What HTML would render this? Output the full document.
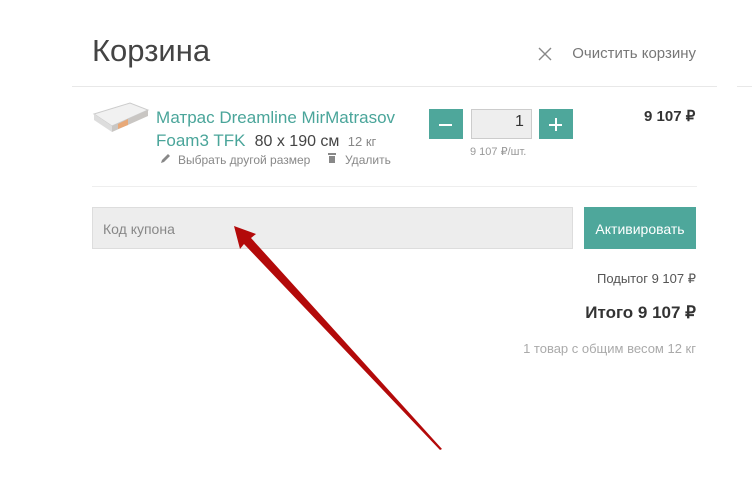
<!DOCTYPE html>
<html><head><meta charset="utf-8"><style>
body{margin:0;width:752px;height:494px;background:#fff;font-family:"Liberation Sans",sans-serif;position:relative;overflow:hidden}
.a{position:absolute;white-space:nowrap}
</style></head><body>
<div class="a" style="left:92px;top:33px;font-size:31px;color:#444;">Корзина</div>
<svg class="a" style="left:538px;top:47px" width="14" height="14"><path d="M1 1L13 13M13 1L1 13" stroke="#888" stroke-width="1.4"/></svg>
<div class="a" style="right:56px;top:45px;font-size:15px;color:#777;">Очистить корзину</div>
<div class="a" style="left:72px;top:86px;width:645px;height:1px;background:#e8e8e8"></div>
<div class="a" style="left:737px;top:86px;width:15px;height:1px;background:#e8e8e8"></div>
<svg class="a" style="left:90px;top:100px" width="62" height="36"><path d="M4 14L40 3L58 10L22 26Z" fill="#f1f1f1" stroke="#ccc"/><path d="M4 14L22 26L22 32L4 20Z" fill="#ddd"/><path d="M22 26L58 10L58 16L22 32Z" fill="#c9c6c3"/><path d="M28 24L38 19L38 25L28 29Z" fill="#e8a978"/></svg>
<div class="a" style="left:156px;top:106px;font-size:17px;color:#4aa59a;line-height:23px">Матрас Dreamline MirMatrasov<br>Foam3 TFK <span style="color:#444;font-size:16px">&nbsp;80 x 190 см</span> <span style="color:#888;font-size:13px">&nbsp;12 кг</span></div>
<svg class="a" style="left:159px;top:153px" width="12" height="12"><path d="M2 10L3 7L9 1L11 3L5 9Z" fill="#888"/></svg>
<div class="a" style="left:178px;top:153px;font-size:12px;color:#888;">Выбрать другой размер</div>
<svg class="a" style="left:327px;top:152px" width="10" height="12"><rect x="1" y="1" width="8" height="2" fill="#888"/><rect x="2" y="4" width="6" height="7" fill="#888"/></svg>
<div class="a" style="left:345px;top:153px;font-size:12px;color:#888;">Удалить</div>
<div class="a" style="left:429px;top:109px;width:34px;height:30px;background:#4ea79b"></div>
<div class="a" style="left:439px;top:124px;width:13px;height:2px;background:#fff"></div>
<div class="a" style="left:471px;top:109px;width:59px;height:28px;background:#eee;border:1px solid #ccc;"></div>
<div class="a" style="left:515px;top:113px;font-size:16px;color:#333;">1</div>
<div class="a" style="left:539px;top:109px;width:34px;height:30px;background:#4ea79b"></div>
<div class="a" style="left:549px;top:124px;width:13px;height:2px;background:#fff"></div>
<div class="a" style="left:555px;top:118px;width:2px;height:13px;background:#fff"></div>
<div class="a" style="left:470px;top:145px;font-size:11px;color:#999;">9 107 ₽/шт.</div>
<div class="a" style="left:644px;top:107px;font-size:15px;font-weight:bold;color:#333;">9 107 ₽</div>
<div class="a" style="left:92px;top:186px;width:605px;height:1px;background:#eee"></div>
<div class="a" style="left:92px;top:207px;width:479px;height:40px;background:#ededed;border:1px solid #ddd"></div>
<div class="a" style="left:103px;top:221px;font-size:14px;color:#888;">Код купона</div>
<div class="a" style="left:584px;top:207px;width:112px;height:42px;background:#4ea79b"></div>
<div class="a" style="left:584px;top:221px;width:112px;text-align:center;font-size:14px;color:#fff;">Активировать</div>
<div class="a" style="right:56px;top:271px;font-size:13px;color:#555;">Подытог 9 107 ₽</div>
<div class="a" style="right:56px;top:303px;font-size:17px;font-weight:bold;color:#333;">Итого 9 107 ₽</div>
<div class="a" style="right:56px;top:341px;font-size:13px;color:#aaa;">1 товар с общим весом 12 кг</div>
<svg class="a" style="left:0;top:0" width="752" height="494"><path d="M234 226L256 234L251 238L442 449L440 450L244 244L240 249Z" fill="#b30a0a"/></svg>
</body></html>
